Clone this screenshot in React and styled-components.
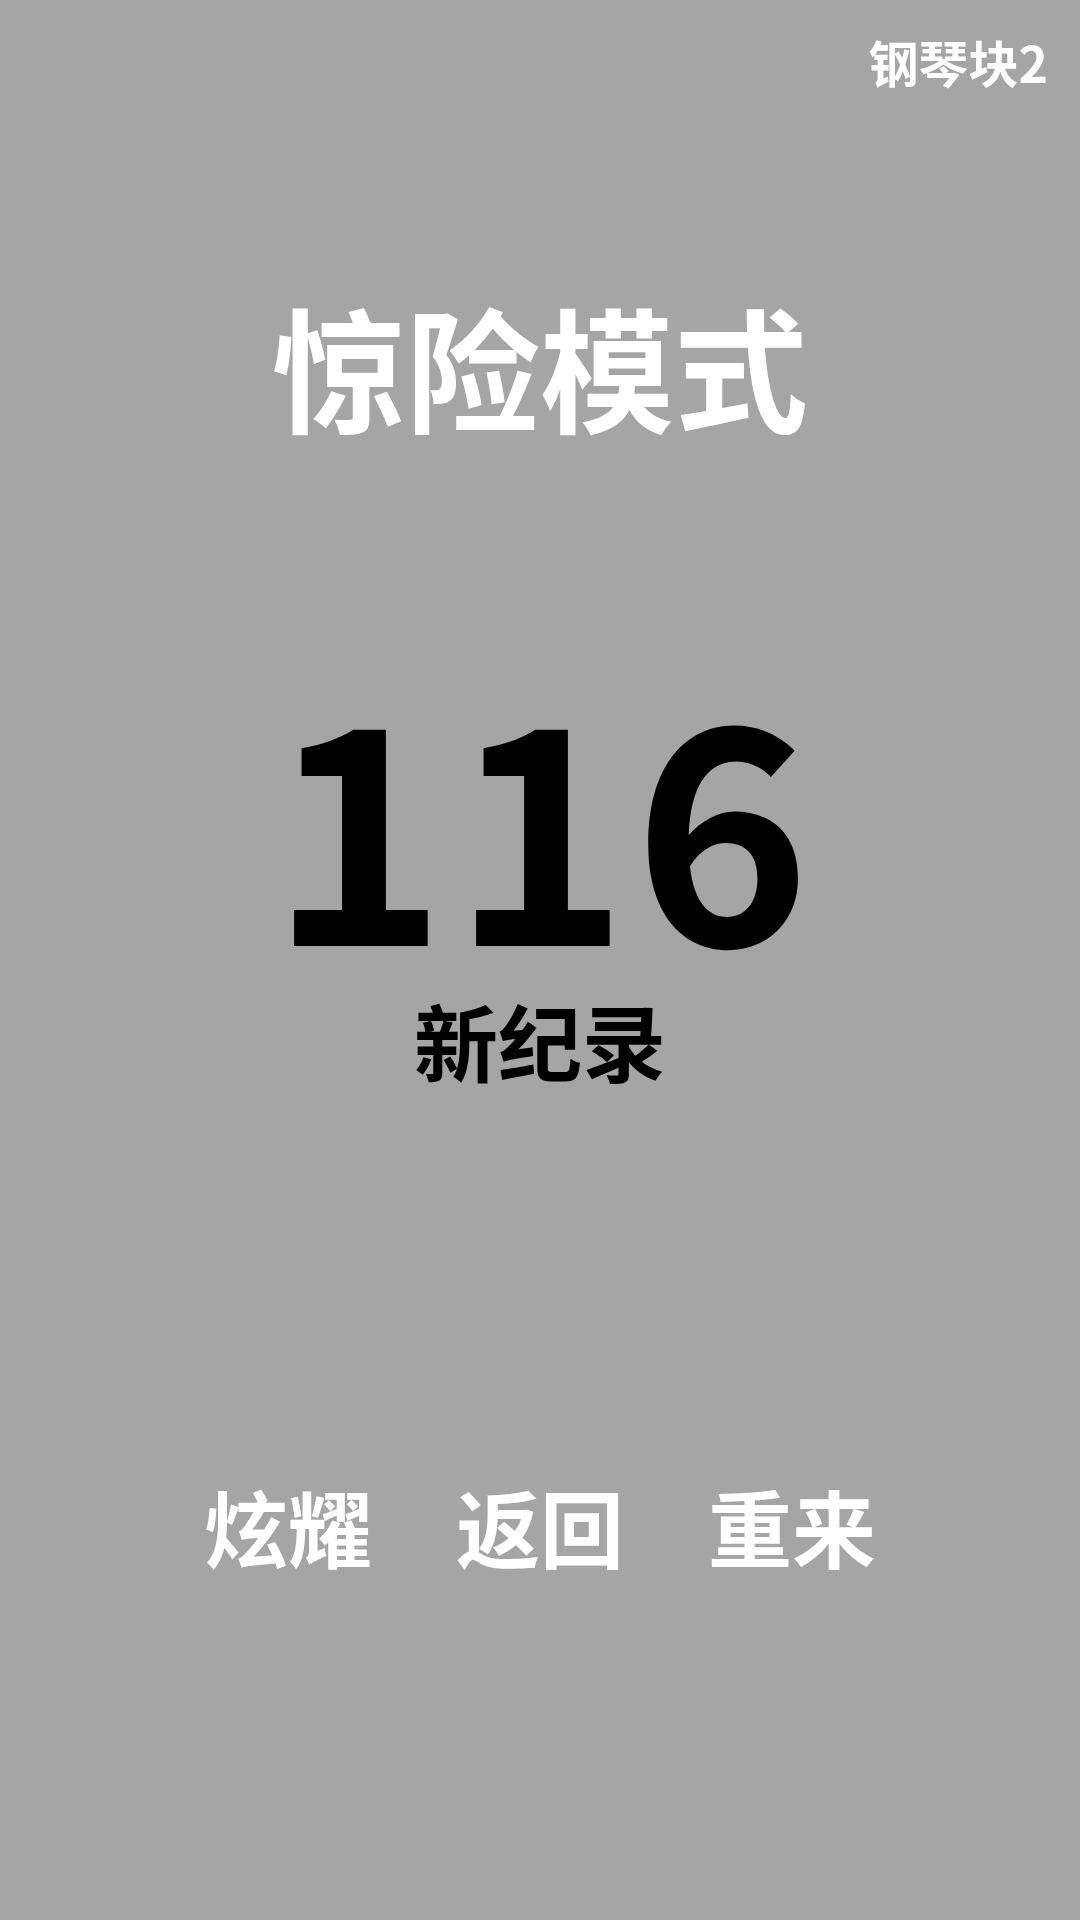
import React from 'react';
import styled, { createGlobalStyle } from 'styled-components';

const GlobalStyle = createGlobalStyle`
    html, body {
        margin: 0;
        padding: 0;
        background: #a5a5a5;
    }
`;

const Screen = styled.div`
    width: 1080px;
    height: 1920px;
    background: #a5a5a5;
    display: flex;
    flex-direction: column;
    font-family: "Noto Sans CJK SC", "Noto Sans", sans-serif;
    font-weight: 700;
    overflow: hidden;
`;

const TopBar = styled.div`
    display: flex;
    justify-content: flex-end;
    padding: 36px 32px 0 0;
`;

const GameName = styled.div`
    color: #fff;
    font-size: 50px;
    line-height: 1;
`;

const Line = styled.div`
    display: flex;
    justify-content: center;
    margin-top: ${(p) => p.$top}px;
`;

const Title = styled.div`
    color: #fff;
    font-size: 134px;
    line-height: 1;
`;

const Score = styled.div`
    color: #000;
    font-size: 300px;
    line-height: 1;
    letter-spacing: 5px;
    padding-left: 5px;
`;

const Record = styled.div`
    color: #000;
    font-size: 84px;
    line-height: 1;
`;

const Actions = styled.div`
    display: flex;
    justify-content: center;
    gap: 84px;
    margin-top: ${(p) => p.$top}px;
`;

const ActionButton = styled.button`
    border: none;
    background: none;
    padding: 0;
    color: #fff;
    font-family: inherit;
    font-weight: 700;
    font-size: 84px;
    line-height: 1;
    white-space: nowrap;
    cursor: pointer;
`;

const actions = ['炫耀', '返回', '重来'];

export default function App() {
    return (
        <>
            <GlobalStyle />
            <Screen>
                <TopBar>
                    <GameName>钢琴块2</GameName>
                </TopBar>
                <Line $top={212}>
                    <Title>惊险模式</Title>
                </Line>
                <Line $top={233}>
                    <Score>116</Score>
                </Line>
                <Line $top={33}>
                    <Record>新纪录</Record>
                </Line>
                <Actions $top={402}>
                    {actions.map((a) => (
                        <ActionButton key={a}>{a}</ActionButton>
                    ))}
                </Actions>
            </Screen>
        </>
    );
}
